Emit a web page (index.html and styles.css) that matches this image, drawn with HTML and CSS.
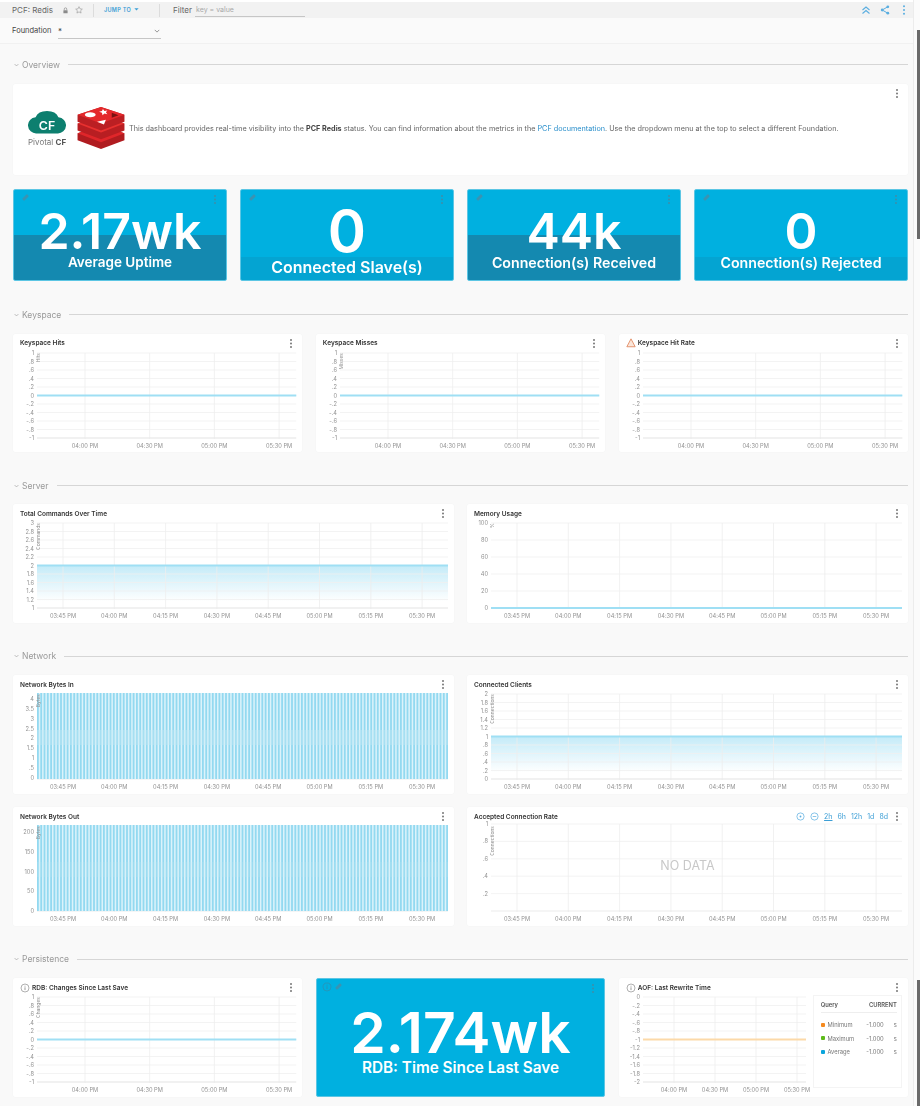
FILE: index.html
```html
<html>

<head>
  <title>PCF: Redis</title>
  <link rel="stylesheet" href="styles.css">
</head>

<body>
  <div class="topbar">
    <span class="dash-title">PCF: Redis</span>
    <svg class="top-icon" viewBox="0 0 10 10"><rect x="2" y="4.5" width="6" height="4.5" rx=".6" fill="#8a8a8a"/><path d="M3.2 4.5V3a1.8 1.8 0 0 1 3.6 0v1.5" fill="none" stroke="#8a8a8a"/></svg>
    <svg class="top-icon star" viewBox="0 0 12 12"><path d="M6 1l1.5 3.3 3.5.4-2.6 2.4.7 3.5L6 8.8l-3.1 1.8.7-3.5L1 4.7l3.5-.4z" fill="none" stroke="#8a8a8a" stroke-width=".8"/></svg>
    <span class="top-sep"></span>
    <span class="jump">JUMP TO <svg class="caret" viewBox="0 0 8 5"><path d="M.5.5L4 4 7.5.5z" fill="#3d9fd6"/></svg></span>
    <span class="top-sep"></span>
    <span class="filter-label">Filter</span>
    <span class="filter-input">key = value</span>
    <span class="top-actions">
      <svg class="action" viewBox="0 0 10 10"><path d="M1.5 5L5 2l3.5 3M1.5 8.5L5 5.500l3.5 3" fill="none" stroke="#5aaee0" stroke-width="1.100"/></svg>
      <svg class="action" viewBox="0 0 10 10"><path d="M7.800 1.800L2.200 5l5.600 3.200" fill="none" stroke="#5aaee0"/><circle cx="7.800" cy="1.800" r="1.400" fill="#5aaee0"/><circle cx="2.200" cy="5" r="1.400" fill="#5aaee0"/><circle cx="7.800" cy="8.200" r="1.400" fill="#5aaee0"/></svg>
      <svg class="action" viewBox="0 0 10 10"><circle cx="5" cy="1.200" r="1" fill="#5aaee0"/><circle cx="5" cy="5" r="1" fill="#5aaee0"/><circle cx="5" cy="8.800" r="1" fill="#5aaee0"/></svg>
    </span>
  </div>

  <div class="varbar">
    <span class="var-label">Foundation</span>
    <span class="var-select">*<svg class="var-caret" viewBox="0 0 8 5"><path d="M1 1l3 3 3-3" fill="none" stroke="#777"/></svg></span>
  </div>

  <div class="scroll-track"><div class="scroll-thumb"></div><div class="scroll-thumb lower"></div></div>

  <div class="content">
    <div class="section first"><svg class="chev" viewBox="0 0 8 5"><path d="M1 1l3 3 3-3" fill="none" stroke="#999"/></svg><span>Overview</span><i></i></div>
    <div class="card intro">
      <span class="menu dots"></span>
      <div class="pcf-logo">
        <svg viewBox="0 0 40 26" class="cloud"><path d="M9 25a8.500 8.500 0 0 1-1-17A12.500 9 0 0 1 32 8a8.500 8.500 0 0 1-1 17z" fill="#0d7f6f"/><text x="20" y="21" class="cf-mark">CF</text></svg>
        <div class="pcf-name">Pivotal <b>CF</b></div>
      </div>
      <svg class="redis-logo" viewBox="0 0 50 44">
        <path d="M1 28l24-8 24 8v7L25 44 1 35z" fill="#b01c20"/>
        <path d="M1 28l24-8 24 8-24 9z" fill="#e0262a"/>
        <path d="M1 18l24-8 24 8v7l-24 9-24-9z" fill="#b81e22"/>
        <path d="M1 18l24-8 24 8-24 9z" fill="#e8302f"/>
        <path d="M1 9l24-8 24 8v7l-24 9-24-9z" fill="#bb1f23"/>
        <path d="M1 9l24-8 24 8-24 9z" fill="#e4282b"/>
        <ellipse cx="14" cy="9" rx="5.500" ry="2.600" fill="#fff"/>
        <path d="M27 3l1.500 2 3-.5-1.500 2 1.500 2-3-.7-2 1.700-.5-2.500-3-1 3-.8z" fill="#fff"/>
        <path d="M21 16l9-2-2 5z" fill="#fff"/>
        <path d="M36 7l7 2.500-7 2.500z" fill="#7a1414"/>
      </svg>
      <p class="intro-text">This dashboard provides real-time visibility into the <b>PCF Redis</b> status. You can find information about the metrics in the <a>PCF documentation</a>. Use the dropdown menu at the top to select a different Foundation.</p>
    </div>
    <div class="stats">
      <div class="stat band-high"><span class="pin"></span><span class="menu dots dark"></span><div class="stat-value">2.17wk</div><div class="stat-label">Average Uptime</div></div>
      <div class="stat band-low slave"><span class="pin"></span><span class="menu dots dark"></span><div class="stat-value">0</div><div class="stat-label">Connected Slave(s)</div></div>
      <div class="stat band-high conn"><span class="pin"></span><span class="menu dots dark"></span><div class="stat-value">44k</div><div class="stat-label">Connection(s) Received</div></div>
      <div class="stat band-low conn"><span class="pin"></span><span class="menu dots dark"></span><div class="stat-value">0</div><div class="stat-label">Connection(s) Rejected</div></div>
    </div>

    <div class="section"><svg class="chev" viewBox="0 0 8 5"><path d="M1 1l3 3 3-3" fill="none" stroke="#999"/></svg><span>Keyspace</span><i></i></div>
    <div class="row three">
      <div class="card panel"><div class="panel-head">Keyspace Hits<span class="menu dots"></span></div><svg class="chart" data-chart="ones" data-unit="Hits"></svg></div>
      <div class="card panel"><div class="panel-head">Keyspace Misses<span class="menu dots"></span></div><svg class="chart" data-chart="ones" data-unit="Misses"></svg></div>
      <div class="card panel"><div class="panel-head"><svg class="head-icon" viewBox="0 0 12 12"><path d="M6 1l5 9.500H1z" fill="#fbe6da" stroke="#e0845a"/></svg>Keyspace Hit Rate<span class="menu dots"></span></div><svg class="chart" data-chart="ones"></svg></div>
    </div>

    <div class="section"><svg class="chev" viewBox="0 0 8 5"><path d="M1 1l3 3 3-3" fill="none" stroke="#999"/></svg><span>Server</span><i></i></div>
    <div class="row two">
      <div class="card panel"><div class="panel-head">Total Commands Over Time<span class="menu dots"></span></div><svg class="chart" data-chart="commands" data-unit="Commands"></svg></div>
      <div class="card panel"><div class="panel-head">Memory Usage<span class="menu dots"></span></div><svg class="chart" data-chart="memory" data-unit="%"></svg></div>
    </div>

    <div class="section"><svg class="chev" viewBox="0 0 8 5"><path d="M1 1l3 3 3-3" fill="none" stroke="#999"/></svg><span>Network</span><i></i></div>
    <div class="row two">
      <div class="card panel"><div class="panel-head">Network Bytes In<span class="menu dots"></span></div><svg class="chart" data-chart="bytesin" data-unit="Bytes"></svg></div>
      <div class="card panel"><div class="panel-head">Connected Clients<span class="menu dots"></span></div><svg class="chart" data-chart="clients" data-unit="Connections"></svg></div>
      <div class="card panel"><div class="panel-head">Network Bytes Out<span class="menu dots"></span></div><svg class="chart" data-chart="bytesout" data-unit="Bytes"></svg></div>
      <div class="card panel"><div class="panel-head">Accepted Connection Rate
        <span class="ranges">
          <svg class="range-icon" viewBox="0 0 10 10"><circle cx="5" cy="5" r="4" fill="none" stroke="#5aaee0" stroke-width=".8"/><circle cx="5" cy="5" r="1" fill="#5aaee0"/></svg>
          <svg class="range-icon" viewBox="0 0 10 10"><circle cx="5" cy="5" r="4" fill="none" stroke="#5aaee0" stroke-width=".8"/><path d="M3 5h4" stroke="#5aaee0" stroke-width=".8"/></svg>
          <u>2h</u><span>6h</span><span>12h</span><span>1d</span><span>8d</span>
        </span>
        <span class="menu dots"></span></div><svg class="chart" data-chart="rate" data-unit="Connections"></svg><div class="no-data">NO DATA</div></div>
    </div>

    <div class="section"><svg class="chev" viewBox="0 0 8 5"><path d="M1 1l3 3 3-3" fill="none" stroke="#999"/></svg><span>Persistence</span><i></i></div>
    <div class="row three">
      <div class="card panel"><div class="panel-head"><svg class="head-icon" viewBox="0 0 12 12"><circle cx="6" cy="6" r="4.800" fill="none" stroke="#888" stroke-width=".8"/><path d="M6 5.200v3.300M6 3.300v1" stroke="#888"/></svg>RDB: Changes Since Last Save<span class="menu dots"></span></div><svg class="chart" data-chart="ones" data-unit="Changes"></svg></div>
      <div class="stat big"><svg class="stat-info" viewBox="0 0 12 12"><circle cx="6" cy="6" r="4.800" fill="none" stroke="#2e8fb0" stroke-width=".9"/><path d="M6 5.200v3.300M6 3.300v1" stroke="#2e8fb0"/></svg><span class="pin after-info"></span><span class="menu dots dark"></span><div class="stat-value">2.174wk</div><div class="stat-label">RDB: Time Since Last Save</div></div>
      <div class="card panel">
        <div class="panel-head"><svg class="head-icon" viewBox="0 0 12 12"><circle cx="6" cy="6" r="4.800" fill="none" stroke="#888" stroke-width=".8"/><path d="M6 5.200v3.300M6 3.300v1" stroke="#888"/></svg>AOF: Last Rewrite Time<span class="menu dots"></span></div>
        <div class="split-body">
          <svg class="chart narrow" data-chart="aof"></svg>
          <div class="legend">
            <div class="legend-head"><span>Query</span><span>CURRENT</span></div>
            <div class="legend-row"><i class="sw orange"></i><span class="q">Minimum</span><span class="v">-1.000</span><span class="u">s</span></div>
            <div class="legend-row"><i class="sw green"></i><span class="q">Maximum</span><span class="v">-1.000</span><span class="u">s</span></div>
            <div class="legend-row"><i class="sw blue"></i><span class="q">Average</span><span class="v">-1.000</span><span class="u">s</span></div>
          </div>
        </div>
      </div>
    </div>
  </div>
  <script src="charts.js"></script>
</body>

</html>
```

FILE: styles.css
```css
html, body {
  margin: 0;
  height: 1106px;
  overflow: hidden;
}

body {
  background: #f9f9f9;
  color: #444;
  font-family: Inter, "Liberation Sans", sans-serif;
  font-size: 7px;
  position: relative;
  filter: blur(.45px);
}

.topbar {
  display: flex;
  align-items: center;
  height: 18px;
  padding-left: 12px;
  padding-right: 5px;
  background: #f2f2f2;
  border-top: 2px solid #fff;
  box-sizing: border-box;
  width: 914px;
}

.dash-title {
  font-size: 8px;
  color: #666;
  width: 50px;
}

.top-icon {
  width: 7px;
  height: 7px;
}

.star {
  width: 8px;
  height: 8px;
  margin-left: 6px;
}

.top-sep {
  width: 1px;
  height: 13px;
  background: #dcdcdc;
  margin-left: 10px;
  margin-right: 10px;
}

.jump {
  color: #3d9fd6;
  font-size: 5.5px;
  font-weight: 600;
  letter-spacing: .3px;
  width: 45px;
  white-space: nowrap;
}

.caret {
  width: 5px;
  height: 3px;
  margin-left: 1px;
  vertical-align: 1px;
}

.filter-label {
  font-size: 8px;
  color: #666;
  width: 22px;
  margin-left: 3px;
}

.filter-input {
  display: block;
  width: 110px;
  height: 14px;
  line-height: 13px;
  padding-left: 1px;
  box-sizing: border-box;
  border-bottom: 1px solid #c6c6c6;
  color: #a8a8a8;
  font-size: 7px;
}

.top-actions {
  margin-left: auto;
  display: flex;
  gap: 9px;
}

.action {
  width: 10px;
  height: 10px;
}

.varbar {
  display: flex;
  align-items: center;
  width: 914px;
  height: 26px;
  padding-left: 12px;
  box-sizing: border-box;
  background: #fafafa;
  border-bottom: 1px solid #f1f1f1;
}

.var-label {
  font-size: 7.5px;
  color: #444;
  width: 46px;
}

.var-select {
  display: flex;
  justify-content: space-between;
  align-items: center;
  width: 103px;
  height: 15px;
  margin-top: 1px;
  box-sizing: border-box;
  border-bottom: 1px solid #c6c6c6;
  font-size: 8px;
}

.var-caret {
  width: 6px;
  height: 4px;
  margin-right: 1px;
}

.scroll-track {
  position: absolute;
  top: 0;
  right: 0;
  width: 7px;
  height: 1106px;
  background: #fbfbfb;
  border-left: 1px solid #ececec;
  box-sizing: border-box;
}

.scroll-thumb {
  position: absolute;
  top: 30px;
  right: 0;
  width: 3px;
  height: 209px;
  background: #6a6a6a;
}

.scroll-thumb.lower {
  top: 980px;
  height: 126px;
}

.content {
  width: 895px;
  margin-left: 13px;
}

.section {
  display: flex;
  align-items: center;
  height: 20px;
  margin-top: 23.7px;
  margin-bottom: 8.9px;
  color: #999;
  font-size: 8.5px;
}

.section.first {
  margin-top: 10.5px;
  margin-bottom: 9.5px;
}

.section i {
  flex: 1;
  height: 1.5px;
  background: #d6d6d6;
  margin-left: 8px;
}

.chev {
  width: 5px;
  height: 4px;
  margin-left: 1px;
  margin-right: 3px;
}

.card {
  background: #fff;
  border-radius: 2px;
  box-shadow: 0 0 1px #e8eaeb;
  position: relative;
}

.menu {
  position: absolute;
  top: 5px;
  right: 10px;
}

.dots {
  width: 2px;
  height: 2px;
  border-radius: 50%;
  background: #777;
  box-shadow: 0 3.5px 0 #777, 0 7px 0 #777;
}

.dots.dark {
  background: #3c8eaa;
  box-shadow: 0 3.5px 0 #3c8eaa, 0 7px 0 #3c8eaa;
}

.intro {
  display: flex;
  align-items: center;
  height: 91px;
  box-sizing: border-box;
  padding-left: 15px;
}

.pcf-logo {
  width: 38px;
  margin-right: 10px;
  margin-bottom: 3px;
  text-align: center;
}

.cloud {
  display: block;
  width: 38px;
  height: 26px;
}

.cf-mark {
  fill: #fff;
  font-family: Inter, sans-serif;
  font-size: 13px;
  font-weight: 600;
  text-anchor: middle;
}

.pcf-name {
  color: #777;
  font-size: 8px;
  margin-top: 2px;
  white-space: nowrap;
}

.pcf-name b {
  color: #555;
}

.redis-logo {
  width: 50px;
  height: 43px;
  margin-right: 3px;
  margin-bottom: 4px;
}

.intro-text {
  margin: 0 0 3px;
  font-size: 7.26px;
  color: #666;
  white-space: nowrap;
}

.intro-text b {
  color: #444;
}

.intro-text a {
  color: #2a8fcb;
}

.stats {
  display: grid;
  grid-template-columns: repeat(4, 214px);
  column-gap: 13px;
  margin-top: 14px;
}

.stat {
  position: relative;
  display: flex;
  flex-direction: column;
  align-items: center;
  height: 92px;
  padding-top: 18px;
  border-radius: 2px;
  background: #00b0e0;
  color: #fff;
  border: 1px solid #5cc6e4;
  box-sizing: border-box;
  white-space: nowrap;
}

.band-high {
  background: linear-gradient(#00b0e0 45px, #1489b0 45px);
}

.band-low {
  background: linear-gradient(#00b0e0 67px, #04a4d2 67px);
}

.pin {
  position: absolute;
  top: 6px;
  left: 8px;
  width: 7px;
  height: 3px;
  border-radius: 1px;
  background: #3a93b2;
  transform: rotate(-45deg);
}

.stat-value {
  font-size: 50px;
  line-height: 46px;
  font-weight: 600;
}

.stat-label {
  font-size: 13.5px;
  font-weight: 600;
  line-height: 16px;
}

.slave .stat-value {
  font-size: 58px;
}

.slave .stat-label {
  font-size: 16px;
  margin-top: 5px;
}

.conn .stat-label {
  font-size: 14.2px;
  margin-top: 1px;
}

.row {
  display: grid;
  column-gap: 13.6px;
  row-gap: 13.8px;
}

.three {
  grid-template-columns: repeat(3, 1fr);
}

.two {
  grid-template-columns: repeat(2, 1fr);
  column-gap: 13px;
}

.panel {
  height: 118.3px;
}

.panel-head {
  display: flex;
  align-items: center;
  height: 17px;
  padding-top: 2px;
  padding-left: 7px;
  box-sizing: border-box;
  font-size: 6.5px;
  font-weight: 600;
  color: #333;
  white-space: nowrap;
}

.head-icon {
  width: 10px;
  height: 10px;
  margin-right: 2px;
}

.ranges {
  display: flex;
  align-items: center;
  gap: 5px;
  margin-left: auto;
  margin-right: 20px;
  color: #3d9fd6;
  font-size: 7px;
  font-weight: 400;
}

.range-icon {
  width: 9px;
  height: 9px;
}

.chart {
  display: block;
  width: 100%;
  height: 101px;
  overflow: visible;
}

.chart text {
  font-family: Inter, "Liberation Sans", sans-serif;
  font-size: 5.7px;
  fill: #929292;
}

.chart .unit {
  font-size: 5px;
}

.no-data {
  position: absolute;
  top: 51px;
  left: 0;
  width: 100%;
  text-align: center;
  color: #c8c8c8;
  font-size: 12.5px;
}

.stat.big {
  height: 118.3px;
  padding-top: 28px;
  background: #00b0e0;
}

.big .stat-value {
  font-size: 57px;
  line-height: 52px;
}

.big .stat-label {
  font-size: 15.3px;
  line-height: 18px;
}

.stat-info {
  position: absolute;
  top: 3px;
  left: 5px;
  width: 10px;
  height: 10px;
}

.pin.after-info {
  left: 18px;
}

.split-body {
  display: flex;
}

.chart.narrow {
  width: 194px;
  flex: none;
}

.legend {
  width: 89px;
  height: 93px;
  box-sizing: border-box;
  border: 1px solid #f4f4f4;
  padding: 5px 4px 0 7px;
  font-size: 5.8px;
  color: #777;
}

.legend-head {
  display: flex;
  justify-content: space-between;
  padding-bottom: 4px;
  margin-bottom: 5px;
  border-bottom: 1px solid #eee;
  color: #555;
  font-weight: 600;
}

.legend-row {
  display: flex;
  align-items: center;
  height: 13.4px;
}

.sw {
  width: 4px;
  height: 4px;
  border-radius: 1px;
  margin-right: 3px;
}

.orange { background: #f58a1f; }
.green { background: #5ebb1a; }
.blue { background: #0ba5dc; }

.q { width: 41px; }
.v { width: 29px; }
```

FILE: charts.js
```js
// draws the panel charts into their svg elements
var NS = 'http://www.w3.org/2000/svg';
var T4 = ['04:00 PM', '04:30 PM', '05:00 PM', '05:30 PM'];
var T8 = ['03:45 PM', '04:00 PM', '04:15 PM', '04:30 PM', '04:45 PM', '05:00 PM', '05:15 PM', '05:30 PM'];

function range(from, step, n) {
  var out = [];
  for (var i = 0; i < n; i++) out.push(from + step * i);
  return out;
}

function fmt(v, dec) {
  if (dec == 0) return String(v);
  var s = v.toFixed(dec).replace(/\.0$/, '');
  return s.replace(/^(-?)0\./, '$1.');
}

var WIDE = { times: T8, first: 50, step: 51.3 };
var NARROW = { times: T4, first: 72, step: 64.7 };

var CONFIG = {
  ones: { base: NARROW, ticks: range(1, -0.2, 11), dec: 1, line: 0.5 },
  commands: { base: WIDE, ticks: range(3, -0.2, 11), dec: 1, line: 0.5, fill: true },
  memory: { base: WIDE, ticks: [100, 80, 60, 40, 20, 0], dec: 0, line: 1 },
  clients: { base: WIDE, ticks: range(2, -0.2, 11), dec: 1, line: 0.5, fill: true },
  bytesin: { base: WIDE, ticks: [4, 3.5, 3, 2.5, 2, 1.5, 1, 0.5, 0], dec: 1, spikes: true, y0: 7, ys: 9.85, band: 0.4 },
  bytesout: { base: WIDE, ticks: [200, 150, 100, 50, 0], dec: 0, spikes: true, y0: 8, ys: 19.8, band: 0.2 },
  rate: { base: WIDE, ticks: [1, 0.8, 0.6, 0.4, 0.2], dec: 1, top: 0, rows: 5 },
  aof: { base: { times: T4, first: 55, step: 41 }, ticks: range(0, -0.2, 11), dec: 1, line: 0.5, orange: true, inset: 7 }
};

function el(svg, name, attrs, text) {
  var n = document.createElementNS(NS, name);
  for (var k in attrs) n.setAttribute(k, attrs[k]);
  if (text !== undefined) n.textContent = text;
  svg.appendChild(n);
  return n;
}

function draw(svg) {
  var name = svg.getAttribute('data-chart');
  var c = CONFIG[name];
  var w = svg.getBoundingClientRect().width;
  var left = 24;
  var right = w - (c.inset || 6);
  var top = c.top === undefined ? 2 : c.top;
  var bottom = 87;
  var lineY = top + (bottom - top) * c.line;
  svg.setAttribute('viewBox', '0 0 ' + w + ' 101');

  if (c.fill) {
    var grad = el(svg, 'linearGradient', { id: 'fade-' + name, x1: 0, x2: 0, y1: 0, y2: 1 });
    el(grad, 'stop', { offset: 0, 'stop-color': '#c4ebf8' });
    el(grad, 'stop', { offset: 0.85, 'stop-color': '#ffffff' });
    el(svg, 'rect', { x: left, y: lineY, width: right - left, height: bottom - lineY, fill: 'url(#fade-' + name + ')' });
  }

  // horizontal grid + y labels
  var span = (bottom - top) / (c.rows || c.ticks.length - 1);
  c.ticks.forEach(function (t, i) {
    var y = c.spikes ? c.y0 + c.ys * i : top + span * i;
    if (!c.spikes) el(svg, 'line', { x1: left, x2: right, y1: y, y2: y, stroke: '#f0f0f0', 'stroke-width': 0.8 });
    el(svg, 'text', { x: left - 3, y: y + 2, 'text-anchor': 'end' }, fmt(t, c.dec));
  });

  // vertical grid + time labels
  c.base.times.forEach(function (t, i) {
    var x = c.base.first + c.base.step * i;
    el(svg, 'line', { x1: x, x2: x, y1: top, y2: bottom + 1, stroke: '#eeeeee', 'stroke-width': 0.8 });
    el(svg, 'text', { x: x, y: bottom + 10, 'text-anchor': 'middle' }, t);
  });
  el(svg, 'line', { x1: left, x2: right, y1: bottom, y2: bottom, stroke: '#e6e6e6', 'stroke-width': 0.8 });

  if (c.line !== undefined) {
    el(svg, 'line', { x1: left, x2: right, y1: lineY, y2: lineY, stroke: c.orange ? '#fcd9a8' : '#9fdff4', 'stroke-width': 1.8 });
  }
  if (c.spikes) {
    el(svg, 'rect', { x: left, y: 1, width: right - left, height: bottom - 1, fill: '#dcf3fb' });
    for (var x = left; x < right; x += 3.3) {
      el(svg, 'rect', { x: x, y: 1, width: 1.8, height: bottom - 1, fill: '#93d9f0' });
    }
    el(svg, 'rect', { x: left, y: 38, width: right - left, height: 15, fill: '#c3e9f6', opacity: c.band });
  }

  var unit = svg.getAttribute('data-unit');
  if (unit) {
    el(svg, 'text', { class: 'unit', transform: 'translate(' + (left + 3) + ' 2) rotate(-90)', 'text-anchor': 'end' }, unit);
  }
}

var charts = document.querySelectorAll('svg[data-chart]');
for (var i = 0; i < charts.length; i++) draw(charts[i]);
```
